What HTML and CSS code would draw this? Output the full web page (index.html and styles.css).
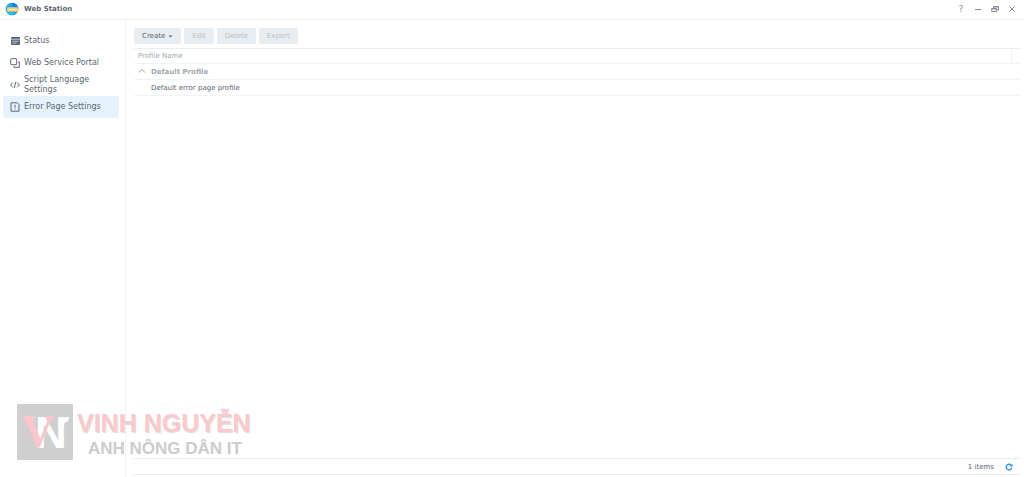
FILE: index.html
```html
<!DOCTYPE html>
<html lang="en">
<head>
<meta charset="utf-8">
<title>Web Station</title>
<link rel="stylesheet" href="styles.css">
</head>
<body>
<div class="window">
  <header class="titlebar">
    <svg class="app-icon" viewBox="0 0 14 14" aria-hidden="true">
      <defs><linearGradient id="globe" x1="0" y1="0" x2="1" y2="1"><stop offset="0" stop-color="#13b8f5"/><stop offset="1" stop-color="#1678dc"/></linearGradient></defs>
      <circle cx="7" cy="7" r="6.3" fill="url(#globe)"/>
      <path d="M7 .7A6.3 6.3 0 0 1 13.3 7H9Z" fill="#1283e5"/>
      <path d="M3 10.2h8.5A6.3 6.3 0 0 1 3 12Z" fill="#25c2ee"/>
      <rect x="2" y="5.2" width="11.5" height="4.6" rx=".7" fill="#f3cc78"/>
      <path d="M3.5 7.6h8.5" stroke="#fff2c9" stroke-width="1.3" stroke-dasharray="2.3 .5"/>
    </svg>
    <h1 class="title">Web Station</h1>
    <div class="controls">
      <button class="control help" aria-label="Help">?</button>
      <button class="control" aria-label="Minimize"><svg viewBox="0 0 8 8"><path d="M1 4.5h6"/></svg></button>
      <button class="control" aria-label="Restore"><svg viewBox="0 0 8 8"><path d="M2.5 3V1.5h5V5H6M.7 3.5h5v3h-5ZM.7 4h5M2.5 2h5"/></svg></button>
      <button class="control" aria-label="Close"><svg viewBox="0 0 8 8"><path d="m1.5 1.5 5 5m0-5-5 5"/></svg></button>
    </div>
  </header>
  <div class="body">
    <nav class="sidebar">
      <a class="item" href="#status"><svg viewBox="0 0 10 10"><rect x="1" y="1" width="9" height="8" rx=".8" fill="#5b6673" stroke="none"/><path d="M1 3.3h9M2.5 5.3h6M2.5 7.1h4" stroke="#e4e7ea" stroke-width=".7"/></svg><span>Status</span></a>
      <a class="item" href="#portal"><svg viewBox="0 0 10 10"><rect x=".7" y=".7" width="6" height="6" rx=".6"/><path d="M8 4h1.3v5.3H4V8"/></svg><span>Web Service Portal</span></a>
      <a class="item" href="#script"><svg viewBox="0 0 10 10"><path d="M2.7 2.7.6 5l2.1 2.3M7.3 2.7 9.4 5 7.3 7.3M5.9 1.8 4.1 8.2"/></svg><span>Script Language Settings</span></a>
      <a class="item active" href="#errors" aria-current="page"><svg viewBox="0 0 10 10"><path d="M1 .8h6.3L9 2.5v6.7H1ZM5 2.8v2.8M5 6.4v1"/></svg><span>Error Page Settings</span></a>
    </nav>
    <main class="content">
      <div class="toolbar">
        <button class="button">Create <svg class="caret" viewBox="0 0 4 3"><path d="M0 .5h4L2 2.5Z"/></svg></button>
        <button class="button" disabled>Edit</button>
        <button class="button" disabled>Delete</button>
        <button class="button" disabled>Export</button>
      </div>
      <table class="profiles">
        <thead><tr><th scope="col">Profile Name</th><th class="spacer"></th></tr></thead>
        <tbody>
          <tr class="group"><td colspan="2"><svg class="chevron" viewBox="0 0 8 6"><path d="m1 4.5 3-3 3 3"/></svg>Default Profile</td></tr>
          <tr class="profile"><td colspan="2">Default error page profile</td></tr>
        </tbody>
      </table>
      <footer class="footer">
        <span class="count">1 items</span>
        <button class="refresh" aria-label="Refresh"><svg viewBox="0 0 8 8"><path d="M6.5 2.5A2.9 2.9 0 1 0 6.9 4.5"/><path d="M7.4.7v2.8H4.6Z" fill="#188ce8" stroke="none"/></svg></button>
      </footer>
    </main>
  </div>
  <div class="watermark">
    <svg class="brand" viewBox="0 0 56 56" role="img" aria-label="VN">
      <rect width="56" height="56" fill="#cfcfcf"/>
      <text class="letter letter-n" x="18" y="44">N</text>
      <path d="M41 20c0-4 4-7 11-7 0 3-1 5-5 6v4h-6ZM21 44c3-1 5-3 6-7v4c0 2-2 4-6 3Z" fill="#fff"/>
      <text class="letter letter-v" x="4" y="43">V</text>
    </svg>
    <div class="wordmark">
      <div class="name">VINH NGUYỄN</div>
      <div class="tagline">ANH NÔNG DÂN IT</div>
    </div>
  </div>
</div>
</body>
</html>
```
FILE: styles.css
```css
* { box-sizing: border-box; }
body {
  margin: 0;
  background: #fff;
  color: #5b6673;
  font: 8px/10px "DejaVu Sans", Verdana, sans-serif;
}
button { border: 0; padding: 0; color: inherit; font: inherit; background: none; }
svg { display: block; fill: none; stroke: #5b6673; flex: none; }
.window { position: relative; display: flex; flex-direction: column; min-height: 100vh; }
.titlebar { display: flex; align-items: center; height: 20px; padding: 0 7px 2px 5px; border-bottom: 1px solid #edf2f5; }
.app-icon { width: 14px; height: 14px; stroke: none; }
.title { flex: 1; margin: 0 0 0 5px; font-size: 7px; }
.controls { display: flex; gap: 7px; }
.control { display: grid; place-items: center; width: 10px; height: 10px; }
.control svg { width: 8px; height: 8px; stroke: #848d96; }
.help { color: #848d96; font-size: 9px; }
.body { display: flex; flex: 1; }
.sidebar { flex: none; width: 126px; padding: 10px 6px 0 3px; border-right: 1px solid #edf2f5; }
.item { display: flex; align-items: center; gap: 4px; min-height: 22px; padding: 1px 7px; border-radius: 2px; color: inherit; text-decoration: none; }
.item svg { width: 10px; height: 10px; }
.active { background: #e5f2fe; }
.content { display: flex; flex: 1; flex-direction: column; min-width: 0; padding: 8px 4px 2px 8px; }
.toolbar { display: flex; gap: 3px; margin-bottom: 4px; }
.button { display: flex; align-items: center; gap: 3px; height: 16px; padding: 0 8px; border-radius: 2px; background: #e8edf1; font-size: 7px; }
.button:disabled { color: #b8bfc6; }
.caret { width: 5px; height: 3px; fill: #5b6673; stroke: none; }
.profiles { width: 100%; border-collapse: collapse; border-top: 1px solid #e8eff4; font-size: 7px; }
.profiles th, .profiles td { height: 16px; padding: 0 4px; border-bottom: 1px solid #eff3f6; text-align: left; }
.profiles th { height: 15px; color: #a1a8ae; font-weight: normal; }
.profiles .spacer { width: 9px; padding: 0; border-left: 1px solid #eff3f6; }
.profiles .group td { color: #a1a8ae; font-weight: bold; }
.profiles .profile td { padding-left: 17px; }
.chevron { display: inline-block; width: 8px; height: 6px; margin-right: 5px; stroke: #929aa2; }
.footer { display: flex; align-items: center; justify-content: flex-end; gap: 4px; height: 17px; margin-top: auto; border: solid #e8eff4; border-width: 1px 0; font-size: 7px; }
.refresh { padding: 2px 7px 2px 6px; border-left: 1px solid #f3f6f8; }
.refresh svg { width: 8px; height: 8px; stroke: #188ce8; stroke-width: 1.2; }
.watermark { position: absolute; left: 17px; bottom: 17px; display: flex; gap: 4px; pointer-events: none; font-family: "Liberation Sans", Arial, sans-serif; font-weight: bold; white-space: nowrap; }
.brand { width: 56px; height: 56px; stroke: none; }
.letter { font-weight: bold; }
.letter-n { fill: #fff; font-size: 44px; }
.letter-v { fill: #f9c6cc; font-family: "Liberation Serif", serif; font-size: 47px; }
.name { padding-top: 6px; color: #f9c9ce; font-size: 25px; line-height: 26px; text-shadow: 1px 1px 1px #ddd; }
.tagline { padding: 3px 0 0 11px; color: #ccc; font-size: 17px; line-height: 20px; }
```
